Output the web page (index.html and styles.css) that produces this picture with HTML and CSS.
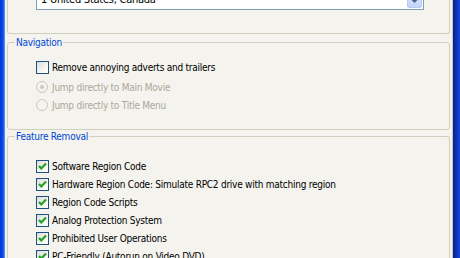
FILE: index.html
```html
<!DOCTYPE html>
<html>
<head>
<meta charset="utf-8">
<link rel="stylesheet" href="styles.css">
</head>
<body>
<div class="window">
  <div class="frame-left"></div>
  <div class="tab">
    <div class="group group-top">
      <div class="combo">
        <span class="combo-text">1 United States, Canada</span>
        <span class="combo-btn"><svg width="9" height="6" viewBox="0 0 9 6"><path d="M1 1 L4.5 4.5 L8 1" stroke="#4d6185" stroke-width="2" fill="none"/></svg></span>
      </div>
    </div>
    <fieldset class="group group-nav">
      <legend>Navigation</legend>
      <div class="row row-gap"><span class="cb"></span><span>Remove annoying adverts and trailers</span></div>
      <div class="row disabled"><span class="radio checked"></span><span>Jump directly to Main Movie</span></div>
      <div class="row disabled"><span class="radio"></span><span>Jump directly to Title Menu</span></div>
    </fieldset>
    <fieldset class="group group-feat">
      <legend>Feature Removal</legend>
      <div class="row"><span class="cb on"><svg width="11" height="11" viewBox="0 0 11 11"><polyline points="2,5 4.3,7.5 9,2.5" stroke="#21a121" stroke-width="2.2" fill="none"/></svg></span><span>Software Region Code</span></div>
      <div class="row"><span class="cb on"><svg width="11" height="11" viewBox="0 0 11 11"><polyline points="2,5 4.3,7.5 9,2.5" stroke="#21a121" stroke-width="2.2" fill="none"/></svg></span><span>Hardware Region Code: Simulate RPC2 drive with matching region</span></div>
      <div class="row"><span class="cb on"><svg width="11" height="11" viewBox="0 0 11 11"><polyline points="2,5 4.3,7.5 9,2.5" stroke="#21a121" stroke-width="2.2" fill="none"/></svg></span><span>Region Code Scripts</span></div>
      <div class="row"><span class="cb on"><svg width="11" height="11" viewBox="0 0 11 11"><polyline points="2,5 4.3,7.5 9,2.5" stroke="#21a121" stroke-width="2.2" fill="none"/></svg></span><span>Analog Protection System</span></div>
      <div class="row"><span class="cb on"><svg width="11" height="11" viewBox="0 0 11 11"><polyline points="2,5 4.3,7.5 9,2.5" stroke="#21a121" stroke-width="2.2" fill="none"/></svg></span><span>Prohibited User Operations</span></div>
      <div class="row"><span class="cb on"><svg width="11" height="11" viewBox="0 0 11 11"><polyline points="2,5 4.3,7.5 9,2.5" stroke="#21a121" stroke-width="2.2" fill="none"/></svg></span><span>PC-Friendly (Autorun on Video DVD)</span></div>
    </fieldset>
  </div>
  <div class="frame-right"></div>
</div>
</body>
</html>
```
FILE: styles.css
```css
html, body {
  margin: 0;
  padding: 0;
  overflow: hidden;
}
body {
  font-family: "DejaVu Sans Condensed", "DejaVu Sans", sans-serif;
  font-stretch: condensed;
  font-size: 10px;
  letter-spacing: -0.25px;
  color: #000;
  background: #f4f3ee;
}
.window {
  display: flex;
  height: 258px;
  width: 460px;
}
.frame-left {
  width: 5px;
  flex: none;
  background: linear-gradient(to right, #0035d8 0, #0a4ce8 60%, #6f98f0 100%);
}
.frame-right {
  width: 7px;
  flex: none;
  background: linear-gradient(to right, #0a1f8a 0, #0b2fb0 40%, #1548d8 100%);
}
.tab {
  flex: 1;
  min-width: 0;
  background: #f4f3ee;
  border-right: 1px solid #c8c8c0;
  padding: 0 2px 0 2px;
}
.group {
  border: 1px solid #d0d0bf;
  border-radius: 3px;
  margin: 0;
  min-width: 0;
}
.group-top {
  border-top: none;
  border-radius: 0 0 3px 3px;
  padding: 0 25px 23px 28px;
}
.combo {
  margin-top: -11px;
  height: 21px;
  box-sizing: border-box;
  border: 1px solid #7f9db9;
  background: #fff;
  display: flex;
  align-items: center;
  padding: 1px;
}
.combo-text {
  flex: 1;
  padding-left: 3px;
  font-size: 11px;
}
.combo-btn {
  width: 15px;
  height: 17px;
  box-sizing: border-box;
  border: 1px solid #bacaf0;
  border-radius: 2px;
  background: linear-gradient(to bottom, #e6eefc, #c1d3fb);
  display: flex;
  align-items: center;
  justify-content: center;
}
fieldset.group legend {
  color: #0046d5;
  padding: 0 1px;
  margin-left: 0;
  line-height: 13px;
}
.group-nav {
  margin-top: 2px;
  padding: 9px 0 15px 7px;
}
.group-feat {
  padding: 14px 0 0 7px;
  border-bottom: none;
}
.row {
  display: flex;
  align-items: center;
  gap: 3px;
  height: 18px;
  white-space: nowrap;
  padding-left: 21px;
}
.row-gap {
  margin-bottom: 2px;
}
.disabled {
  color: #aca899;
}
.cb {
  width: 13px;
  height: 13px;
  box-sizing: border-box;
  border: 1px solid #1c5180;
  background: linear-gradient(135deg, #dcdcd7 0%, #f5f5f2 60%, #ffffff 100%);
  display: flex;
  align-items: center;
  justify-content: center;
  flex: none;
}
.radio {
  width: 12px;
  height: 12px;
  margin-right: 1px;
  box-sizing: border-box;
  border: 1px solid #cac8bb;
  border-radius: 50%;
  background: #f4f3ee;
  display: flex;
  align-items: center;
  justify-content: center;
  flex: none;
}
.radio.checked::after {
  content: "";
  width: 4px;
  height: 4px;
  border-radius: 50%;
  background: #cac8bb;
}
```
